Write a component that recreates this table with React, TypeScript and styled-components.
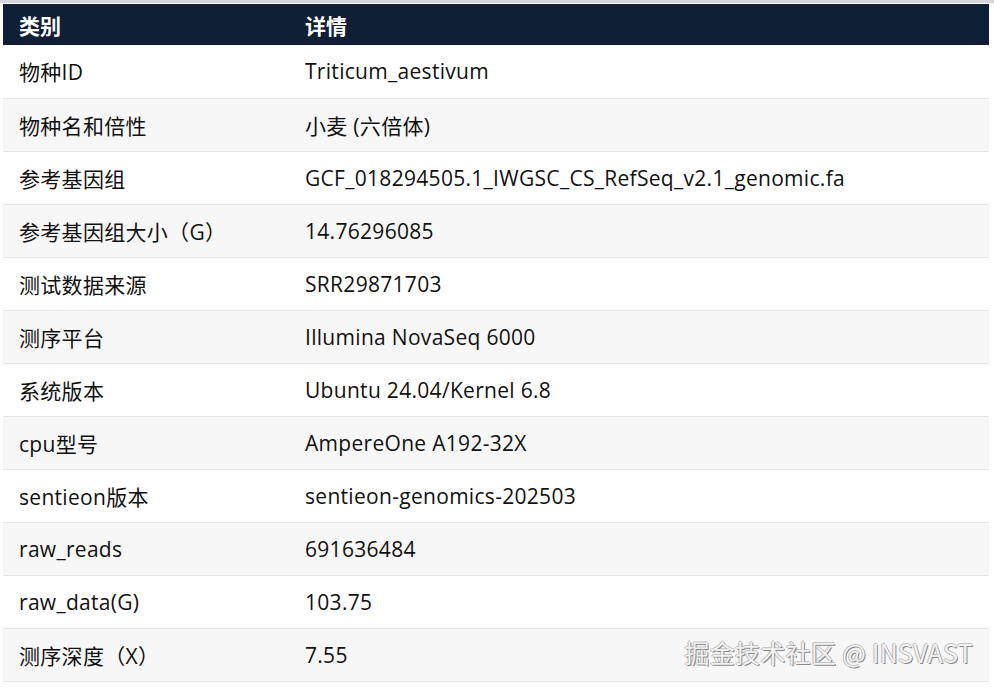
import React from "react";
import styled, { createGlobalStyle } from "styled-components";

const Global = createGlobalStyle`
  html, body { margin: 0; padding: 0; background: #ffffff; }
  body { font-family: "Open Sans", "Noto Sans CJK SC", sans-serif; }
`;

const Page = styled.div`
  width: 994px;
  height: 688px;
  box-sizing: border-box;
  padding: 1px 5px 0 3px;
  position: relative;
  overflow: hidden;
  border-top: 3px solid #d4d6d9;
`;

const Table = styled.table`
  width: 986px;
  border-collapse: collapse;
  table-layout: fixed;
  font-family: "Open Sans", "Noto Sans CJK SC", sans-serif;
  font-size: 21px;
  color: #111111;
`;

const HeadRow = styled.tr`
  background: #0f1f36;
  height: 41px;
`;

const Th = styled.th<{ $w?: number }>`
  width: ${(p) => (p.$w ? `${p.$w}px` : "auto")};
  box-sizing: border-box;
  text-align: left;
  color: #ffffff;
  font-weight: 700;
  font-family: "Noto Sans CJK SC", sans-serif;
  font-size: 21px;
  padding: 0 16px;
  line-height: 40px;
`;

const Row = styled.tr<{ $alt: boolean }>`
  background: ${(p) => (p.$alt ? "#f7f7f7" : "#ffffff")};
  height: 53px;
  border-bottom: 1px solid #e6e6e6;
`;

const Td = styled.td`
  padding: 0 16px;
  vertical-align: middle;
  white-space: nowrap;
  letter-spacing: 0.3px;
`;

const Watermark = styled.div`
  position: absolute;
  right: 21px;
  bottom: 18px;
  font-family: "Noto Sans CJK SC", sans-serif;
  font-size: 25px;
  color: #f2f2f2;
  text-shadow: 1px 1px 0 #8a8a8a, -1px 0 0 #b8b8b8, 0 -1px 0 #c4c4c4;
  letter-spacing: 0.3px;
`;

const rows: [string, string][] = [
  ["物种ID", "Triticum_aestivum"],
  ["物种名和倍性", "小麦 (六倍体)"],
  ["参考基因组", "GCF_018294505.1_IWGSC_CS_RefSeq_v2.1_genomic.fa"],
  ["参考基因组大小（G）", "14.76296085"],
  ["测试数据来源", "SRR29871703"],
  ["测序平台", "Illumina NovaSeq 6000"],
  ["系统版本", "Ubuntu 24.04/Kernel 6.8"],
  ["cpu型号", "AmpereOne A192-32X"],
  ["sentieon版本", "sentieon-genomics-202503"],
  ["raw_reads", "691636484"],
  ["raw_data(G)", "103.75"],
  ["测序深度（X）", "7.55"],
];

export default function App() {
  return (
    <>
      <Global />
      <Page>
        <Table>
          <thead>
            <HeadRow>
              <Th $w={286}>类别</Th>
              <Th>详情</Th>
            </HeadRow>
          </thead>
          <tbody>
            {rows.map(([k, v], i) => (
              <Row key={k} $alt={i % 2 === 1}>
                <Td>{k}</Td>
                <Td>{v}</Td>
              </Row>
            ))}
          </tbody>
        </Table>
        <Watermark>掘金技术社区 @ INSVAST</Watermark>
      </Page>
    </>
  );
}
